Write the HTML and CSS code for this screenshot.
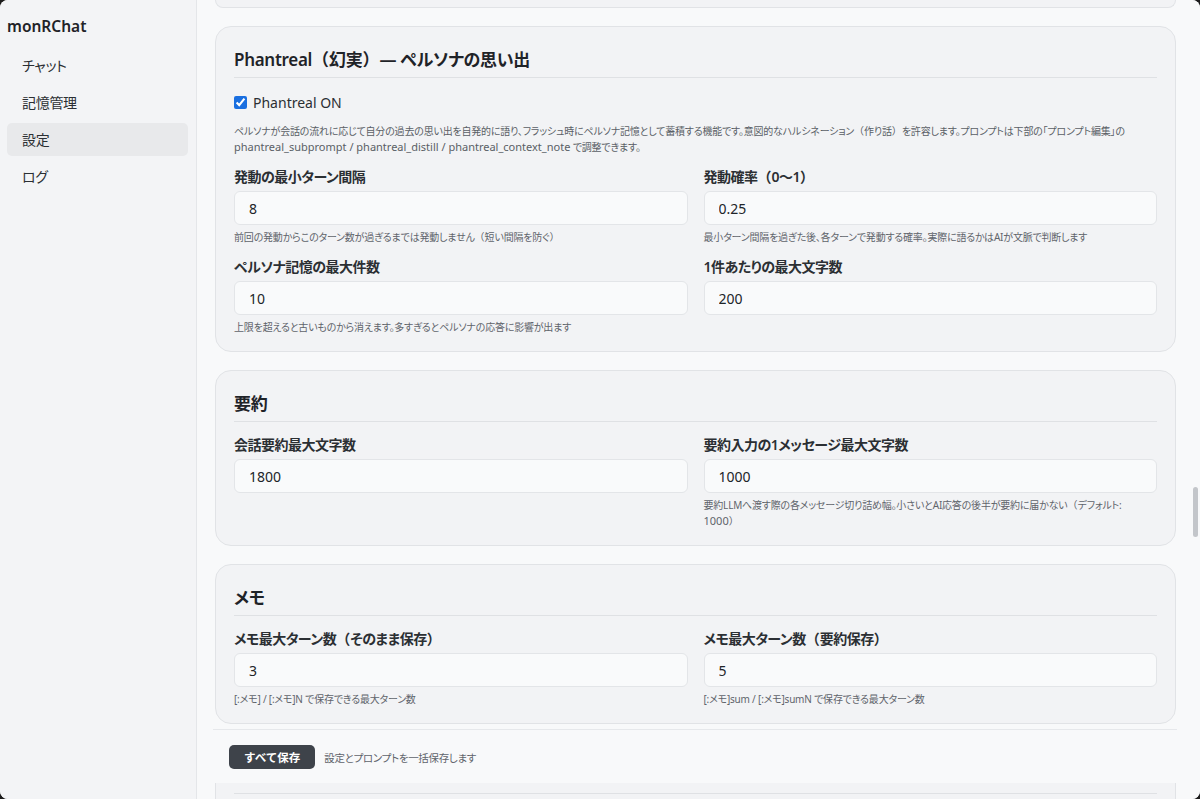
FILE: index.html
```html
<!DOCTYPE html>
<html lang="ja">
<head>
<meta charset="utf-8">
<title>monRChat - 設定</title>
<link rel="stylesheet" href="styles.css">
</head>
<body>
<div class="app">
  <aside class="sidebar">
    <div class="brand">monRChat</div>
    <nav class="nav">
      <a class="nav-item">チャット</a>
      <a class="nav-item">記憶管理</a>
      <a class="nav-item active">設定</a>
      <a class="nav-item">ログ</a>
    </nav>
  </aside>

  <main class="main">
    <div class="card card-tail"></div>

    <section class="card">
      <h2 class="card-title">Phantreal<span class="fw">（</span>幻実<span class="fw">）</span>— ペルソナの思い出</h2>
      <label class="check-row"><input type="checkbox" checked> <span>Phantreal ON</span></label>
      <p class="desc">ペルソナが会話の流れに応じて自分の過去の思い出を自発的に語り、フラッシュ時にペルソナ記憶として蓄積する機能です。意図的なハルシネーション<span class="fw">（</span>作り話<span class="fw">）</span>を許容します。プロンプトは下部の「プロンプト編集」の <span class="ident">phantreal_subprompt / phantreal_distill / phantreal_context_note</span> で調整できます。</p>
      <div class="grid">
        <div class="field">
          <label class="label">発動の最小ターン間隔</label>
          <input class="input" type="text" value="8">
          <div class="help">前回の発動からこのターン数が過ぎるまでは発動しません<span class="fw">（</span>短い間隔を防ぐ<span class="fw">）</span></div>
        </div>
        <div class="field">
          <label class="label">発動確率<span class="fw">（</span>0〜1<span class="fw">）</span></label>
          <input class="input" type="text" value="0.25">
          <div class="help">最小ターン間隔を過ぎた後、各ターンで発動する確率。実際に語るかはAIが文脈で判断します</div>
        </div>
        <div class="field">
          <label class="label">ペルソナ記憶の最大件数</label>
          <input class="input" type="text" value="10">
          <div class="help">上限を超えると古いものから消えます。多すぎるとペルソナの応答に影響が出ます</div>
        </div>
        <div class="field">
          <label class="label">1件あたりの最大文字数</label>
          <input class="input" type="text" value="200">
        </div>
      </div>
    </section>

    <section class="card">
      <h2 class="card-title">要約</h2>
      <div class="grid">
        <div class="field">
          <label class="label">会話要約最大文字数</label>
          <input class="input" type="text" value="1800">
        </div>
        <div class="field">
          <label class="label">要約入力の1メッセージ最大文字数</label>
          <input class="input" type="text" value="1000">
          <div class="help">要約LLMへ渡す際の各メッセージ切り詰め幅。小さいとAI応答の後半が要約に届かない<span class="fw">（</span>デフォルト: <span class="ident">1000</span><span class="fw">）</span></div>
        </div>
      </div>
    </section>

    <section class="card">
      <h2 class="card-title">メモ</h2>
      <div class="grid">
        <div class="field">
          <label class="label">メモ最大ターン数<span class="fw">（</span>そのまま保存<span class="fw">）</span></label>
          <input class="input" type="text" value="3">
          <div class="help">[:メモ] / [:メモ]N で保存できる最大ターン数</div>
        </div>
        <div class="field">
          <label class="label">メモ最大ターン数<span class="fw">（</span>要約保存<span class="fw">）</span></label>
          <input class="input" type="text" value="5">
          <div class="help">[:メモ]sum / [:メモ]sumN で保存できる最大ターン数</div>
        </div>
      </div>
    </section>

    <div class="save-bar">
      <button class="btn-save">すべて保存</button>
      <span class="save-note">設定とプロンプトを一括保存します</span>
    </div>

    <section class="card card-head">
      <div class="head-rule"></div>
    </section>
  </main>

  <div class="scrollbar"><div class="thumb"></div></div>
</div>
</body>
</html>
```

FILE: styles.css
```css
* { box-sizing: border-box; }

html, body {
  margin: 0;
  padding: 0;
  height: 100%;
  background: #1c1c1c;
}

body {
  font-family: "Noto Sans", "Noto Sans CJK JP", sans-serif;
  font-feature-settings: "palt";
  color: #212529;
  overflow: hidden;
}

.fw {
  font-feature-settings: normal;
  letter-spacing: 0;
}

.app {
  display: flex;
  width: 1200px;
  height: 799px;
  background: #f8f9fa;
  border-radius: 8px;
  overflow: hidden;
}

/* Sidebar */
.sidebar {
  width: 197px;
  flex: none;
  background: #f3f4f6;
  border-right: 1px solid #e4e6e9;
  padding: 14px 8px 0 7px;
}

.brand {
  font-size: 15.5px;
  font-weight: 600;
  line-height: 24px;
  color: #1f2328;
  margin-bottom: 11px;
}

.nav {
  display: flex;
  flex-direction: column;
  gap: 4px;
}

.nav-item {
  display: block;
  height: 33px;
  line-height: 33px;
  padding-left: 15px;
  font-size: 14px;
  letter-spacing: -0.3px;
  color: #2b2f33;
  border-radius: 5px;
}

.nav-item.active {
  background: #e8e9eb;
}

/* Main */
.main {
  flex: 1;
  min-width: 0;
  display: flex;
  flex-direction: column;
  padding: 0 12px 0 18px;
  gap: 18px;
  overflow: hidden;
}

.card {
  flex: none;
  background: #f2f3f5;
  border: 1px solid #e1e3e6;
  border-radius: 16px;
  padding: 20px 18px 16px;
}

.card-tail {
  height: 8px;
  padding: 0;
  border-top: none;
  border-radius: 0 0 16px 16px;
}

.card-title {
  margin: 0 0 13px;
  font-size: 17px;
  font-weight: 600;
  letter-spacing: -0.3px;
  line-height: 26px;
  padding-bottom: 4px;
  border-bottom: 1px solid #dfe1e4;
  color: #1f2328;
}

.check-row {
  display: flex;
  align-items: center;
  gap: 6px;
  height: 22px;
  font-size: 14px;
  color: #2b2f33;
}

.check-row input {
  margin: 0;
  width: 13px;
  height: 13px;
  accent-color: #1a6fe0;
}

.desc {
  margin: 10px 0 0;
  font-size: 10px;
  letter-spacing: -0.2px;
  line-height: 16px;
  color: #5a5f66;
}

.ident {
  font-size: 11px;
  letter-spacing: 0;
}

.grid {
  display: grid;
  grid-template-columns: 1fr 1fr;
  column-gap: 16px;
  row-gap: 12px;
  margin-top: 12px;
}

.card-title + .grid { margin-top: 0; }

.field {
  display: flex;
  flex-direction: column;
}

.label {
  font-size: 14px;
  font-weight: 600;
  letter-spacing: -0.5px;
  line-height: 20px;
  color: #2b2f33;
  margin-bottom: 4px;
}

.input {
  height: 34px;
  border: 1px solid #e3e5e8;
  border-radius: 6px;
  background: #f9fafb;
  padding: 0 14px;
  font-family: inherit;
  font-size: 14px;
  color: #212529;
  outline: none;
}

.help {
  margin-top: 5px;
  padding-right: 24px;
  font-size: 10px;
  letter-spacing: -0.2px;
  line-height: 15px;
  color: #5f646b;
}

/* Save bar */
.save-bar {
  flex: none;
  margin: -13px -1px 0 -2px;
  border-top: 1px solid #e6e8eb;
  background: #f8f9fa;
  height: 54px;
  padding: 15px 16px 0;
  display: flex;
  align-items: flex-start;
  gap: 9px;
}

.btn-save {
  height: 24px;
  padding: 0 15px;
  border: none;
  border-radius: 5px;
  background: #3e434a;
  color: #ffffff;
  font-family: inherit;
  font-size: 11.5px;
  font-weight: 600;
}

.save-note {
  font-size: 10.5px;
  letter-spacing: -0.3px;
  line-height: 26px;
  color: #5f646b;
}

.card-head {
  margin-top: -18px;
  height: 40px;
  padding: 0 18px;
  border-top: none;
  border-radius: 0;
}

.head-rule {
  height: 11px;
  border-bottom: 1px solid #dfe1e4;
}

/* Scrollbar */
.scrollbar {
  width: 12px;
  flex: none;
  background: #f8f9fa;
  padding: 487px 2px 0 5px;
}

.thumb {
  height: 50px;
  background: #c3c6ca;
  border-radius: 3px;
}
```
